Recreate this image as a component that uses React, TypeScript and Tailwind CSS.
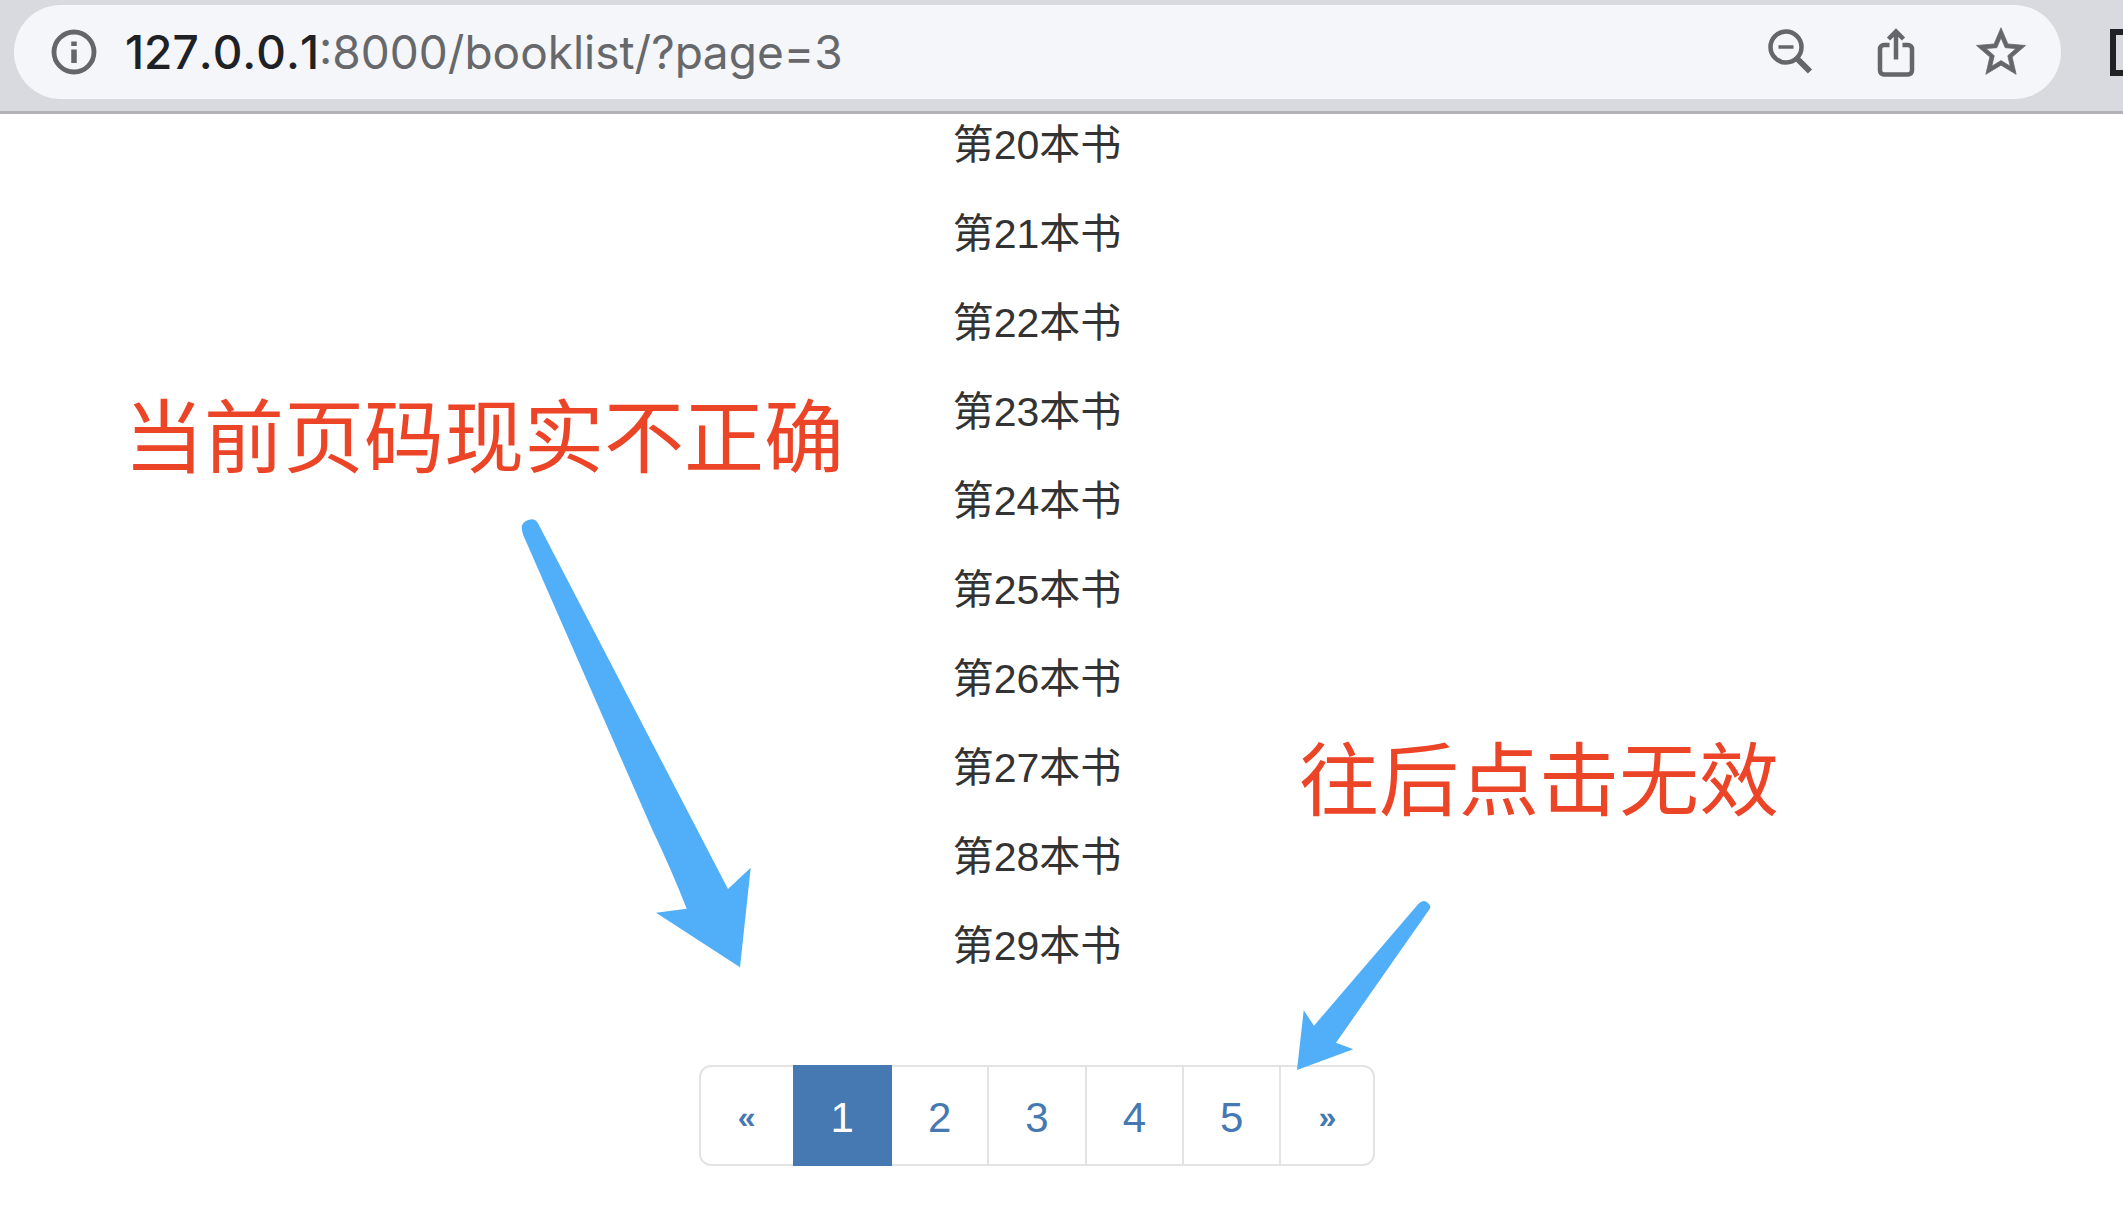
import { useState } from 'react'

const books = [20, 21, 22, 23, 24, 25, 26, 27, 28, 29]
const pages = [1, 2, 3, 4, 5]

function InfoIcon() {
  return (
    <svg className="w-[46px] h-[46px]" viewBox="0 0 46 46" fill="none" stroke="#63666a">
      <circle cx="23" cy="23" r="20" strokeWidth="4.8" />
      <path d="M23 20.500V34M23 12.500v4.500" strokeWidth="5.5" />
    </svg>
  )
}

function ZoomOutIcon() {
  return (
    <svg className="w-[50px] h-[50px]" viewBox="0 0 50 50" fill="none" stroke="#63666a">
      <circle cx="20" cy="20" r="15.500" strokeWidth="4.5" />
      <path d="M12.500 20h15" strokeWidth="3.5" />
      <path d="M31.500 32l12.500 12.500" strokeWidth="6" />
    </svg>
  )
}

function ShareIcon() {
  return (
    <svg className="w-[50px] h-[50px]" viewBox="0 0 50 50" fill="none" stroke="#63666a" strokeWidth="4.5">
      <path d="M18.500 18H13a4 4 0 0 0-4 4v21.500a4 4 0 0 0 4 4h24a4 4 0 0 0 4-4V22a4 4 0 0 0-4-4h-5.500" />
      <path d="M25 32.500V5M17.500 12L25 4.500l7.500 7.500" />
    </svg>
  )
}

function StarIcon() {
  return (
    <svg
      className="w-[50px] h-[50px]"
      viewBox="1.8 1.7 20.4 20.4"
      fill="#63666a"
      stroke="#63666a"
      strokeWidth="0.3"
    >
      <path d="M22 9.240l-7.190-.62L12 2 9.190 8.630 2 9.240l5.460 4.730L5.820 21 12 17.270 18.180 21l-1.630-7.030L22 9.240zM12 15.400l-3.760 2.270 1-4.280-3.320-2.880 4.380-.38L12 6.100l1.710 4.040 4.380.38-3.320 2.880 1 4.280L12 15.400z" />
    </svg>
  )
}

function AddressBar() {
  const [path, setPath] = useState(':8000/booklist/?page=3')

  return (
    <header className="flex items-center h-[114px] pl-[14px] pb-[7px] bg-[#d9dadf] border-b-[3px] border-[#b1b1b6] overflow-hidden">
      <div className="flex flex-1 min-w-0 items-center h-[94px] pl-[37px] pr-[35px] rounded-full bg-[#f5f6f9]">
        <button type="button" aria-label="Site information">
          <InfoIcon />
        </button>
        <div className="flex flex-1 min-w-0 items-center ml-7 font-['Inter',sans-serif] text-[46px] leading-[60px] [font-kerning:none]">
          <label htmlFor="address" className="font-medium text-[#202124]">
            127.0.0.1
          </label>
          <input
            id="address"
            value={path}
            onChange={(e) => setPath(e.target.value)}
            className="flex-1 min-w-0 text-[#66686b] bg-transparent outline-none [font-kerning:none]"
          />
        </div>
        <div className="flex gap-[55px]">
          <button type="button" aria-label="Zoom out">
            <ZoomOutIcon />
          </button>
          <button type="button" aria-label="Share">
            <ShareIcon />
          </button>
          <button type="button" aria-label="Bookmark">
            <StarIcon />
          </button>
        </div>
      </div>
      <div className="w-[13px] ml-[49px]">
        <button
          type="button"
          aria-label="Side panel"
          className="block w-[48px] h-[47px] border-[6px] border-[#202124]"
        />
      </div>
    </header>
  )
}

function Pagination() {
  const cell = 'flex items-center h-[101px] pt-[3px] border-2'
  const idle = 'border-[#e3e3e3] text-[#4679b2]'
  const active = 'relative z-10 border-[#4679b2] bg-[#4679b2] text-white'

  return (
    <nav aria-label="Pages" className="mt-[89px]">
      <ul className="flex pl-[2px] text-[42px]">
        <li className="-ml-[2px]">
          <a
            href="?page=1"
            aria-label="Previous"
            className={`${cell} ${idle} px-[37px] rounded-l-xl text-[32px] font-bold`}
          >
            «
          </a>
        </li>
        {pages.map((page) => (
          <li key={page} className="-ml-[2px]">
            <a
              href={`?page=${page}`}
              className={`${cell} px-9 ${page === 1 ? active : idle}`}
            >
              {page}
            </a>
          </li>
        ))}
        <li className="-ml-[2px]">
          <a
            href="?page=2"
            aria-label="Next"
            className={`${cell} ${idle} px-[37px] rounded-r-xl text-[32px] font-bold`}
          >
            »
          </a>
        </li>
      </ul>
    </nav>
  )
}

// Hand-placed notes and arrows drawn on top of the page
function Annotations() {
  return (
    <div className="font-['Noto_Sans_CJK_SC',sans-serif] text-[80px] leading-[80px] text-[#ec4427] whitespace-nowrap">
      <p className="absolute left-[124px] top-[277px]">当前页码现实不正确</p>
      <p className="absolute left-[1299px] top-[620px]">往后点击无效</p>
      <svg className="absolute left-[500px] top-[386px] w-[280px] h-[480px]" viewBox="0 0 280 480" fill="#51aff9">
        <path d="M37.700 22.700L228 389l22.700-21.300L240 467.300L156 412.700l30.700-4Q172 371 152 329L23.300 35.300Q21.500 30 21.700 26Q24 20 31.700 19.300Q35.500 19.300 37.700 22.700z" />
      </svg>
      <svg className="absolute left-[1270px] top-[766px] z-20 w-[180px] h-[210px]" viewBox="0 0 180 210" fill="#51aff9">
        <path d="M148.300 24L44 145.700L33.700 130.300L27 190l56.300-20.700L66 162.700L160 28.500Q161 26 159 24Q154 18 148.300 24z" />
      </svg>
    </div>
  )
}

export default function App() {
  return (
    <div className="min-h-screen bg-white overflow-hidden">
      <AddressBar />
      <main className="relative font-['Liberation_Sans','Noto_Sans_CJK_SC',sans-serif] leading-[59px] text-[#333]">
        <div className="flex flex-col items-center pt-[2px] pr-[49px]">
          <ul className="flex flex-col gap-[30px] text-[41px]">
            {books.map((n) => (
              <li key={n}>第{n}本书</li>
            ))}
          </ul>
          <Pagination />
        </div>
        <Annotations />
      </main>
    </div>
  )
}
